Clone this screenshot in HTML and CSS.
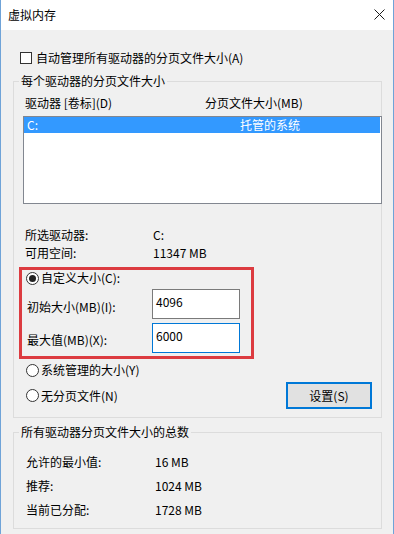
FILE: index.html
```html
<!DOCTYPE html>
<html lang="zh-CN">
<head>
<meta charset="utf-8">
<title>虚拟内存</title>
<link rel="stylesheet" href="styles.css">
</head>
<body>
<div class="window">
  <div class="titlebar">
    <span class="title">虚拟内存</span>
    <svg class="close" width="11" height="11" viewBox="0 0 11 11"><path d="M0.5 0.5 L10.5 10.5 M10.5 0.5 L0.5 10.5" stroke="#1a1a1a" stroke-width="1" fill="none"/></svg>
  </div>
  <div class="content">
    <div class="check-row"><span class="checkbox"></span><span>自动管理所有驱动器的分页文件大小(A)</span></div>

    <fieldset class="group group1">
      <legend>每个驱动器的分页文件大小</legend>
      <div class="headers"><span class="col1">驱动器 [卷标](D)</span><span>分页文件大小(MB)</span></div>
      <div class="listbox">
        <div class="list-row selected"><span class="lcol1">C:</span><span>托管的系统</span></div>
      </div>
      <div class="info first"><span class="ilabel">所选驱动器:</span><span>C:</span></div>
      <div class="info"><span class="ilabel">可用空间:</span><span>11347 MB</span></div>

      <div class="highlight">
        <div class="radio-row"><span class="radio checked"></span><span>自定义大小(C):</span></div>
        <div class="field-row r1"><span class="flabel l1">初始大小(MB)(I):</span><span class="input">4096</span></div>
        <div class="field-row r2"><span class="flabel l2">最大值(MB)(X):</span><span class="input focus">6000</span></div>
      </div>

      <div class="radio-row outer sys"><span class="radio"></span><span>系统管理的大小(Y)</span></div>
      <div class="last-row">
        <div class="radio-row outer"><span class="radio"></span><span>无分页文件(N)</span></div>
        <div class="button">设置(S)</div>
      </div>
    </fieldset>

    <fieldset class="group group2">
      <legend>所有驱动器分页文件大小的总数</legend>
      <div class="total"><span class="tlabel">允许的最小值:</span><span>16 MB</span></div>
      <div class="total"><span class="tlabel">推荐:</span><span>1024 MB</span></div>
      <div class="total"><span class="tlabel">当前已分配:</span><span>1728 MB</span></div>
    </fieldset>
  </div>
</div>
</body>
</html>
```
FILE: styles.css
```css
* { box-sizing: border-box; }
html, body { margin: 0; padding: 0; }
body {
  width: 394px;
  height: 534px;
  overflow: hidden;
  font-family: "Noto Sans CJK SC", "Noto Sans", sans-serif;
  font-size: 12px;
  line-height: 16px;
  color: #000;
  background: #f0f0f0;
}
.window {
  width: 394px;
  height: 534px;
  background: #f0f0f0;
  border-left: 1px solid #6fa3d8;
  border-right: 1px solid #6fa3d8;
}
.titlebar {
  height: 30px;
  background: #fff;
  display: flex;
  align-items: center;
  justify-content: space-between;
  padding: 0 8px 1px 7px;
}
.title { line-height: 16px; }
.close { display: block; margin-top: -1px; }
.content {
  padding: 0 11px 0 12px;
}
.check-row {
  display: flex;
  align-items: center;
  margin-top: 20px;
  padding-left: 7px;
  height: 16px;
}
.checkbox {
  width: 12px;
  height: 12px;
  border: 1px solid #333;
  background: #fff;
  margin-right: 4px;
}
.group {
  margin: 0;
  padding: 0;
  border: 1px solid #dcdcdc;
  width: 369px;
  min-width: 0;
}
.group legend {
  margin-left: 5px;
  padding: 0 2px;
  line-height: 16px;
}
.group1 { margin-top: 7px; padding-bottom: 8px; }
.headers {
  display: flex;
  margin-top: 6px;
  padding-left: 11px;
  height: 16px;
}
.col1 { width: 180px; }
.listbox {
  margin-top: 5px;
  margin-left: 9px;
  width: 359px;
  height: 88px;
  border: 1px solid #828790;
  background: #fff;
}
.list-row {
  display: flex;
  height: 16px;
  padding-left: 3px;
  margin-right: 1px;
}
.list-row.selected { background: #3399ff; color: #fff; }
.lcol1 { width: 213px; }
.info {
  display: flex;
  height: 16px;
  padding-left: 11px;
  margin-top: 2px;
}
.info.first { margin-top: 23px; }
.ilabel { width: 128px; }
.highlight {
  margin-top: 6px;
  margin-left: 5px;
  width: 235px;
  height: 92px;
  border: 3px solid #dc3b40;
}
.radio-row {
  display: flex;
  align-items: center;
  height: 16px;
  padding-left: 4px;
}
.radio-row.outer { padding-left: 12px; }
.radio-row.sys { margin-top: 3px; }
.radio {
  position: relative;
  width: 13px;
  height: 13px;
  border: 1px solid #333;
  border-radius: 50%;
  background: #fff;
  margin-right: 2px;
  flex: none;
}
.radio.checked::after {
  content: "";
  position: absolute;
  left: 2px;
  top: 2px;
  width: 7px;
  height: 7px;
  border-radius: 50%;
  background: #222;
}
.field-row {
  display: flex;
  align-items: flex-start;
  padding-left: 5px;
}
.field-row.r1 { margin-top: 3px; }
.field-row.r2 { margin-top: 4px; }
.flabel { width: 125px; }
.l1 { margin-top: 10px; }
.l2 { margin-top: 9px; }
.input {
  width: 88px;
  height: 30px;
  border: 1px solid #7a7a7a;
  background: #fff;
  padding: 4px 3px 0;
}
.input.focus { border-color: #0078d7; width: 88px; }
.last-row {
  display: flex;
  align-items: center;
  justify-content: space-between;
  margin-top: 4px;
  padding-right: 9px;
}
.button {
  width: 86px;
  height: 27px;
  border: 2px solid #0078d7;
  background: #e1e1e1;
  display: flex;
  align-items: center;
  justify-content: center;
}
.group2 { margin-top: 6px; padding-bottom: 10px; }
.total {
  display: flex;
  height: 16px;
  padding-left: 12px;
  margin-top: 8px;
}
.total:first-of-type { margin-top: 14px; }
.tlabel { width: 129px; }
```
